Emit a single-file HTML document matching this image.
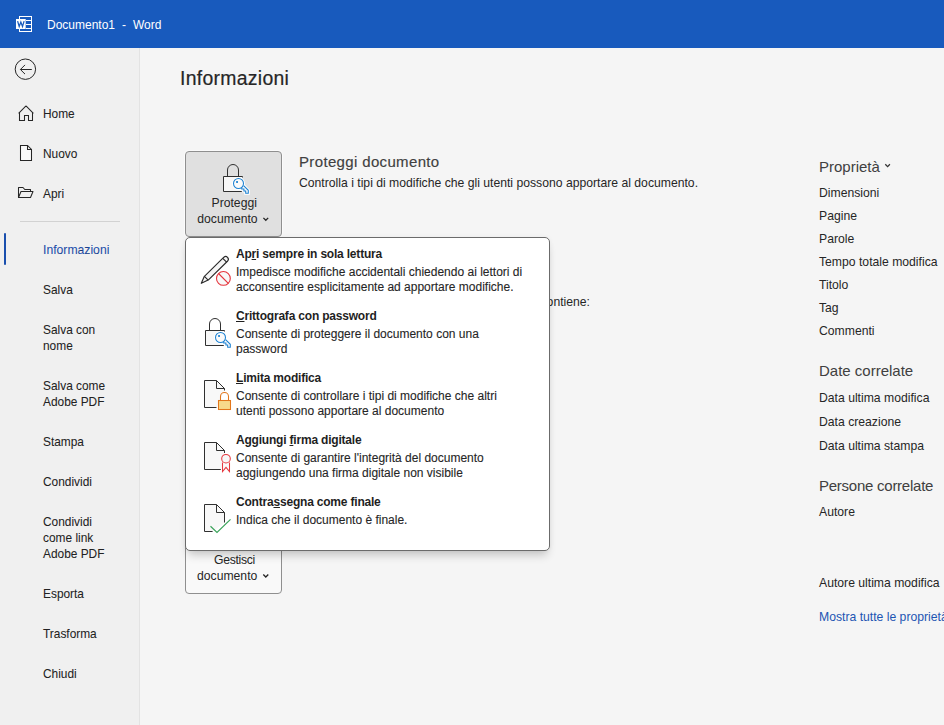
<!DOCTYPE html>
<html><head><meta charset="utf-8">
<style>
*{margin:0;padding:0;box-sizing:border-box}
html,body{width:944px;height:725px;overflow:hidden}
body{position:relative;background:#f5f5f5;font-family:"Liberation Sans",sans-serif;color:#262626;font-size:12.2px}
.t{position:absolute;white-space:nowrap;line-height:16px}
#titlebar{position:absolute;left:0;top:0;width:944px;height:48px;background:#185abd}
#side{position:absolute;left:0;top:48px;width:140px;height:677px;background:#f0f0f0;border-right:1px solid #e3e3e3}
svg.ov{position:absolute;left:0;top:0;overflow:visible;z-index:10}
.nav{position:absolute;left:43px;line-height:16px;color:#222;white-space:nowrap;font-size:11.9px;-webkit-text-stroke:0.05px #222}
.btn{position:absolute;border-radius:4px}
.menu{position:absolute;left:185px;top:237px;width:365px;height:314px;background:#fff;border:1px solid #6b6b6b;border-radius:5px;box-shadow:0 7px 10px -3px rgba(0,0,0,.2),0 0 5px rgba(0,0,0,.05);z-index:5}
.it{position:absolute;left:236px;line-height:15px;color:#262626;font-size:12px;white-space:nowrap;z-index:6;-webkit-text-stroke:0.1px #262626}
.it.b{font-size:12px;letter-spacing:-0.2px;font-weight:bold;color:#1f1f1f;-webkit-text-stroke:0}
.prop{position:absolute;left:819px;color:#262626;line-height:16px;white-space:nowrap}
.h{font-size:15px;line-height:18px;color:#404040;-webkit-text-stroke:0}
</style></head><body>
<div id="titlebar"></div>
<div class="t" style="left:47px;top:17px;color:#fff;font-size:12px">Documento1</div>
<div class="t" style="left:122px;top:17px;color:#fff;font-size:12px">-</div>
<div class="t" style="left:133px;top:17px;color:#fff;font-size:12px">Word</div>
<div id="side"></div>

<div class="nav" style="top:106px">Home</div>
<div class="nav" style="top:146px">Nuovo</div>
<div class="nav" style="top:186px">Apri</div>
<div style="position:absolute;left:20px;top:221px;width:100px;height:1px;background:#d2d2d2"></div>
<div style="position:absolute;left:4px;top:233px;width:2px;height:32px;background:#1a4fae;border-radius:1px"></div>
<div class="nav" style="top:242px;color:#1c4fae;font-size:12.2px">Informazioni</div>
<div class="nav" style="top:282px">Salva</div>
<div class="nav" style="top:322px">Salva con<br>nome</div>
<div class="nav" style="top:378px">Salva come<br>Adobe PDF</div>
<div class="nav" style="top:434px">Stampa</div>
<div class="nav" style="top:474px">Condividi</div>
<div class="nav" style="top:514px">Condividi<br>come link<br>Adobe PDF</div>
<div class="nav" style="top:586px">Esporta</div>
<div class="nav" style="top:626px">Trasforma</div>
<div class="nav" style="top:666px">Chiudi</div>

<div class="t" style="left:180px;top:67px;font-size:19.4px;line-height:22px;color:#262626;letter-spacing:0.3px;-webkit-text-stroke:0.2px #262626">Informazioni</div>

<div class="btn" style="left:185px;top:151px;width:97px;height:86px;background:#e0e0e0;border:1px solid #8f8f8f;box-shadow:0 0 0 1px #fbfbfb"></div>
<div class="t" style="left:211.5px;top:195px;">Proteggi</div>
<div class="t" style="left:197.3px;top:211px;">documento</div>
<div class="t h" style="left:299px;top:153px;letter-spacing:0.35px;-webkit-text-stroke:0.15px #404040">Proteggi documento</div>
<div class="t" style="left:299px;top:175px">Controlla i tipi di modifiche che gli utenti possono apportare al documento.</div>
<div class="t" style="left:440px;top:294px;width:150px;text-align:right">che contiene:</div>

<div class="btn" style="left:185px;top:520px;width:97px;height:74px;background:#f9f9f9;border:1px solid #8f8f8f"></div>
<div class="t" style="left:214px;top:552px;letter-spacing:-0.3px">Gestisci</div>
<div class="t" style="left:197px;top:568px">documento</div>

<div class="menu"></div>
<div class="it b" style="top:246.5px">Ap<u>r</u>i sempre in sola lettura</div>
<div class="it" style="top:265px">Impedisce modifiche accidentali chiedendo ai lettori di<br>acconsentire esplicitamente ad apportare modifiche.</div>
<div class="it b" style="top:308.5px"><u>C</u>rittografa con password</div>
<div class="it" style="top:327px">Consente di proteggere il documento con una<br>password</div>
<div class="it b" style="top:370.5px"><u>L</u>imita modifica</div>
<div class="it" style="top:389px">Consente di controllare i tipi di modifiche che altri<br>utenti possono apportare al documento</div>
<div class="it b" style="top:432.5px">Aggiungi <u>f</u>irma digitale</div>
<div class="it" style="top:451px">Consente di garantire l'integrità del documento<br>aggiungendo una firma digitale non visibile</div>
<div class="it b" style="top:494.5px">Contra<u>s</u>segna come finale</div>
<div class="it" style="top:513px">Indica che il documento è finale.</div>

<div class="prop h" style="top:158px">Proprietà</div>
<div class="prop" style="top:185px">Dimensioni</div>
<div class="prop" style="top:208px">Pagine</div>
<div class="prop" style="top:231px">Parole</div>
<div class="prop" style="top:254px">Tempo totale modifica</div>
<div class="prop" style="top:277px">Titolo</div>
<div class="prop" style="top:300px">Tag</div>
<div class="prop" style="top:323px">Commenti</div>
<div class="prop h" style="top:362px">Date correlate</div>
<div class="prop" style="top:390px">Data ultima modifica</div>
<div class="prop" style="top:414px">Data creazione</div>
<div class="prop" style="top:438px">Data ultima stampa</div>
<div class="prop h" style="top:477px;letter-spacing:-0.25px">Persone correlate</div>
<div class="prop" style="top:504px">Autore</div>
<div class="prop" style="top:575px">Autore ultima modifica</div>
<div class="prop" style="top:609px;color:#1d55b3">Mostra tutte le proprietà</div>

<svg class="ov" width="944" height="725" viewBox="0 0 944 725">
  <!-- word icon -->
  <rect x="19.5" y="16.5" width="12" height="15" fill="none" stroke="#fff" stroke-width="1"/>
  <path d="M26 20.5H31M26 24.5H31M26 28.5H31" stroke="#fff" stroke-width="1"/>
  <rect x="16" y="19" width="9.7" height="10" fill="#fff"/>
  <path d="M17.6 21.1L19.2 26.5L20.85 22.1L22.5 26.5L24.1 21.1" fill="none" stroke="#185abd" stroke-width="1.25" stroke-linejoin="miter"/>
  <!-- back circle -->
  <g fill="none" stroke="#262626" stroke-width="1">
    <circle cx="25.4" cy="69.2" r="10.2"/>
    <path d="M20.4 69.5H31.8M25 64.9L20.4 69.5L25 74.1"/>
  </g>
  <!-- home -->
  <path d="M26 105.9L18.6 113.3M26 105.9L33.4 113.3M19.5 112.5V120.5H24.5V115.5H28.5V120.5H32.5V112.5" fill="none" stroke="#262626" stroke-width="1.05"/>
  <!-- nuovo -->
  <path d="M20.5 145.5H27.5L31.5 149.5V160.5H20.5Z" fill="#fafafa" stroke="#262626" stroke-width="1.05"/>
  <path d="M27.5 145.5V149.5H31.5" fill="none" stroke="#262626" stroke-width="1.05"/>
  <!-- apri -->
  <path d="M18.5 197.5V187.5H23L24.8 189.5H30.5V191.5M18.5 197.5L21 191.5H33L30.5 197.5Z" fill="none" stroke="#262626" stroke-width="1.05" stroke-linejoin="round"/>
  <!-- chevrons -->
  <path d="M263.4 217.9L265.8 220.3L268.2 217.9" fill="none" stroke="#262626" stroke-width="1.3"/>
  <path d="M263.3 574.5L265.8 577L268.3 574.5" fill="none" stroke="#262626" stroke-width="1.3"/>
  <path d="M885.3 164.3L887.6 166.6L889.9 164.3" fill="none" stroke="#333" stroke-width="1.3"/>

  <!-- menu icon 1: pencil + no -->
  <g fill="#f6f6f6" stroke="#2a2a2a" stroke-width="1.15" stroke-linejoin="round">
    <path d="M201.3 283.3L204.4 276.3L223.9 257.2A2.7 2.7 0 0 1 227.7 261L208.2 280.1Z"/>
    <path d="M204.4 276.3L208.2 280.1M222.8 258.3L226.6 262.1" fill="none"/>
  </g>
  <circle cx="223.4" cy="278.4" r="8.3" fill="#fff"/>
  <g fill="#f8f8f8" stroke="#e5343c" stroke-width="1.1">
    <circle cx="223.4" cy="278.4" r="6.9"/>
    <path d="M218.5 273.5L228.3 283.3" fill="none"/>
  </g>
  <!-- menu icon 2: lock + key -->
  <g id="lockkey">
    <path d="M224.5 331.5V330.5H205.5V345.5H223.8" fill="#f7f7f7" stroke="#303030" stroke-width="1"/>
    <path d="M209.5 330.5V324A5.5 5.5 0 0 1 220.5 324V330.5" fill="none" stroke="#303030" stroke-width="1"/>
    <path d="M225.6 339.6L230.3 344.3V347.2H227.7V345H225.9V343H223.7V341.2Z" fill="#fff" stroke="#fff" stroke-width="3"/>
    <circle cx="220.5" cy="337.5" r="5" fill="#fff" stroke="#fff" stroke-width="3"/>
    <path d="M225.6 339.6L230.3 344.3V347.2H227.7V345H225.9V343H223.7V341.2" fill="#fcfcfc" stroke="#1e82d2" stroke-width="1.05"/>
    <circle cx="220.5" cy="337.5" r="5" fill="#fafafa" stroke="#1e82d2" stroke-width="1.05"/>
    <rect x="218.1" y="335.1" width="1.9" height="1.8" fill="#1e82d2"/>
  </g>
  <use href="#lockkey" transform="translate(18 -154)"/>
  <!-- doc icons -->
  <g fill="none" stroke="#303030" stroke-width="1">
    <path d="M216.5 407.5H204.5V380.5H216.5L224.5 388.5V390.5" fill="#f8f8f8"/>
    <path d="M216.5 380.5V388.5H224.5"/>
    <path d="M220.8 469.5H204.5V442.5H216.5L224.5 450.5V453" fill="#f8f8f8"/>
    <path d="M216.5 442.5V450.5H224.5"/>
    <path d="M212.6 531.5H204.5V504.5H216.5L224.5 512.5V522.5" fill="#f8f8f8"/>
    <path d="M216.5 504.5V512.5H224.5"/>
  </g>
  <g stroke="#e2761b" stroke-width="1.05">
    <path d="M220.5 400.5V396.5A4 4 0 0 1 228.5 396.5V400.5" fill="none"/>
    <rect x="218.5" y="400.5" width="12" height="9" fill="#f7d98a"/>
  </g>
  <g stroke="#e6383f" stroke-width="1.05" fill="none">
    <path d="M222.5 462.5V471.5L226 467.3L229.5 471.5V462.5" fill="#fafafa"/>
    <circle cx="226" cy="458.7" r="4.3" fill="#f8f8f8"/>
  </g>
  <path d="M210.5 526.3L217 532.4L230.5 519.4" fill="none" stroke="#3aa35a" stroke-width="1.2"/>
</svg>
</body></html>
